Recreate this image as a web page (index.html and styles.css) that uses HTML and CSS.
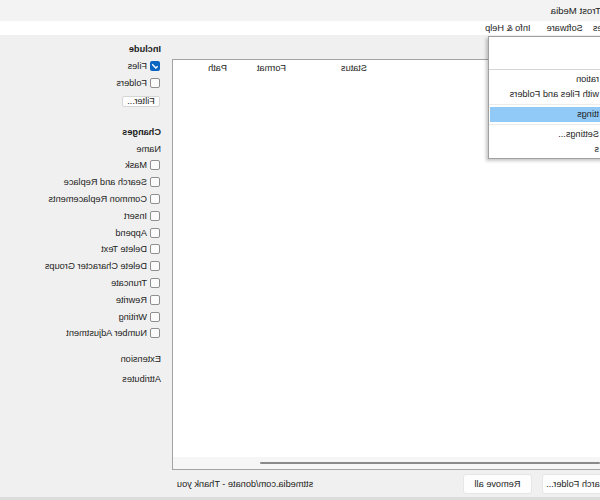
FILE: index.html
```html
<!DOCTYPE html>
<html>
<head>
<meta charset="utf-8">
<link rel="stylesheet" href="styles.css">
</head>
<body>
<div class="app">
  <div class="titlebar"><span class="title">Trost Media</span></div>
  <div class="menubar">
    <span class="mi m1">es</span>
    <span class="mi m2">Software</span>
    <span class="mi m3">Info &amp; Help</span>
  </div>
  <div class="main">
    <div class="listcol">
      <div class="list">
        <div class="lhead">
          <span class="c0"></span>
          <span class="c1">Status</span>
          <span class="c2">Format</span>
          <span class="c3">Path</span>
        </div>
        <div class="lbody"></div>
        <div class="hscroll"><div class="thumb"></div></div>
      </div>
    </div>
    <div class="side">
      <div class="row head">Include</div>
      <div class="row"><span class="cb on"><svg viewBox="0 0 10 10" width="10" height="10"><path d="M2.3 5.2 L4.2 7 L7.8 3.2" fill="none" stroke="#fff" stroke-width="1.3"/></svg></span><span class="lbl">Files</span></div>
      <div class="row"><span class="cb"></span><span class="lbl">Folders</span></div>
      <div class="filter">Filter...</div>
      <div class="row head changes">Changes</div>
      <div class="row">Name</div>
      <div class="crow"><span class="cb"></span><span class="lbl">Mask</span></div>
      <div class="crow"><span class="cb"></span><span class="lbl">Search and Replace</span></div>
      <div class="crow"><span class="cb"></span><span class="lbl">Common Replacements</span></div>
      <div class="crow"><span class="cb"></span><span class="lbl">Insert</span></div>
      <div class="crow"><span class="cb"></span><span class="lbl">Append</span></div>
      <div class="crow"><span class="cb"></span><span class="lbl">Delete Text</span></div>
      <div class="crow"><span class="cb"></span><span class="lbl">Delete Character Groups</span></div>
      <div class="crow"><span class="cb"></span><span class="lbl">Truncate</span></div>
      <div class="crow"><span class="cb"></span><span class="lbl">Rewrite</span></div>
      <div class="crow"><span class="cb"></span><span class="lbl">Writing</span></div>
      <div class="crow"><span class="cb"></span><span class="lbl">Number Adjustment</span></div>
      <div class="row ext">Extension</div>
      <div class="row attr">Attributes</div>
    </div>
  </div>
  <div class="footer">
    <div class="btn b1">Search Folder...</div>
    <div class="btn b2">Remove all</div>
    <span class="donate">sttmedia.com/donate - Thank you</span>
  </div>
  <div class="dropdown">
    <div class="dd"></div>
    <div class="dd"></div>
    <div class="sep"></div>
    <div class="dd">ration</div>
    <div class="dd">with Files and Folders</div>
    <div class="sep faint"></div>
    <div class="dd hl">ttings</div>
    <div class="sep faint"></div>
    <div class="dd">Settings...</div>
    <div class="dd">s</div>
  </div>
</div>
</body>
</html>
```

FILE: styles.css
```css
html, body {
  margin: 0;
  padding: 0;
  width: 600px;
  height: 500px;
  overflow: hidden;
  background: #f0f0f0;
}

.app {
  position: relative;
  width: 600px;
  height: 500px;
  overflow: hidden;
  transform: scaleX(-1);
  font-family: "Liberation Sans", Arial, sans-serif;
  font-size: 9.2px;
  color: #1c1c1c;
  background: #f0f0f0;
  display: flex;
  flex-direction: column;
}

.titlebar {
  height: 21px;
  flex: none;
  background: #f3f3f3;
  display: flex;
  align-items: center;
}

.title {
  margin-left: -1px;
  font-size: 9.6px;
}

.menubar {
  height: 14px;
  flex: none;
  background: #ffffff;
  display: flex;
  align-items: center;
}

.mi { white-space: nowrap; }
.m1 { margin-left: -2.5px; }
.m2 { margin-left: 10px; }
.m3 { margin-left: 16px; }

.main {
  height: 435px;
  flex: none;
  display: flex;
}

.listcol {
  width: 428px;
  flex: none;
}

.list {
  box-sizing: border-box;
  margin-top: 24px;
  height: 411px;
  background: #ffffff;
  border: 1px solid #a3a3a3;
  border-left: none;
  display: flex;
  flex-direction: column;
}

.lhead {
  height: 16px;
  flex: none;
  display: flex;
  align-items: center;
  white-space: nowrap;
}

.c0 { width: 233px; flex: none; }
.c1 { width: 81px; flex: none; }
.c2 { width: 59px; flex: none; }

.lbody { flex: 1; }

.hscroll {
  height: 12px;
  flex: none;
  background: #f6f6f6;
  display: flex;
  align-items: center;
}

.thumb {
  width: 340px;
  height: 2px;
  border-radius: 1px;
  background: #8a8a8a;
}

.side {
  width: 172px;
  flex: none;
  box-sizing: border-box;
  padding: 5px 0 0 11px;
}

.row {
  height: 17px;
  display: flex;
  align-items: center;
  white-space: nowrap;
}

.crow {
  height: 16.8px;
  display: flex;
  align-items: center;
  white-space: nowrap;
}

.head { font-weight: bold; }
.changes { margin-top: 16px; }
.ext { margin-top: 9px; }
.attr { margin-top: 3px; }

.cb {
  box-sizing: border-box;
  width: 10px;
  height: 10px;
  margin-left: 1px;
  border: 1px solid #8f8f8f;
  border-radius: 2px;
  background: #fbfbfb;
  display: flex;
  align-items: center;
  justify-content: center;
  flex: none;
}

.cb svg { display: block; }

.cb.on {
  border: none;
  background: #0a64c2;
}

.lbl { margin-left: 3px; }

.filter {
  box-sizing: border-box;
  margin: 5px 0 0 1px;
  width: 38px;
  height: 11px;
  line-height: 9px;
  text-align: center;
  background: #fdfdfd;
  border: 1px solid #d6d6d6;
  border-radius: 2px;
}

.footer {
  height: 27px;
  flex: none;
  display: flex;
  align-items: center;
  border-bottom: 3px solid #dcdcdc;
}

.btn {
  box-sizing: border-box;
  height: 20px;
  line-height: 18px;
  text-align: center;
  background: #fdfdfd;
  border: 1px solid #e6e6e6;
  border-radius: 3px;
  white-space: nowrap;
  flex: none;
}

.b1 { margin-left: -15px; width: 73px; }
.b2 { margin-left: 10px; width: 69px; }

.donate {
  margin-left: auto;
  margin-right: 177px;
  white-space: nowrap;
}

.dropdown {
  position: absolute;
  left: -20px;
  top: 36px;
  width: 132px;
  box-sizing: border-box;
  background: #ffffff;
  border: 1px solid #a0a0a0;
  box-shadow: 2px 2px 3px rgba(0, 0, 0, 0.22);
  padding-bottom: 1px;
}

.dd {
  height: 15px;
  line-height: 15px;
  padding-left: 20px;
  white-space: nowrap;
  overflow: hidden;
}

.dd.hl {
  background: #91c9f7;
  margin: 0 1px 0 0;
}

.sep {
  height: 1px;
  margin: 2px 0;
  background: #d4d4d4;
}

.sep.faint { background: #ececec; }
```
